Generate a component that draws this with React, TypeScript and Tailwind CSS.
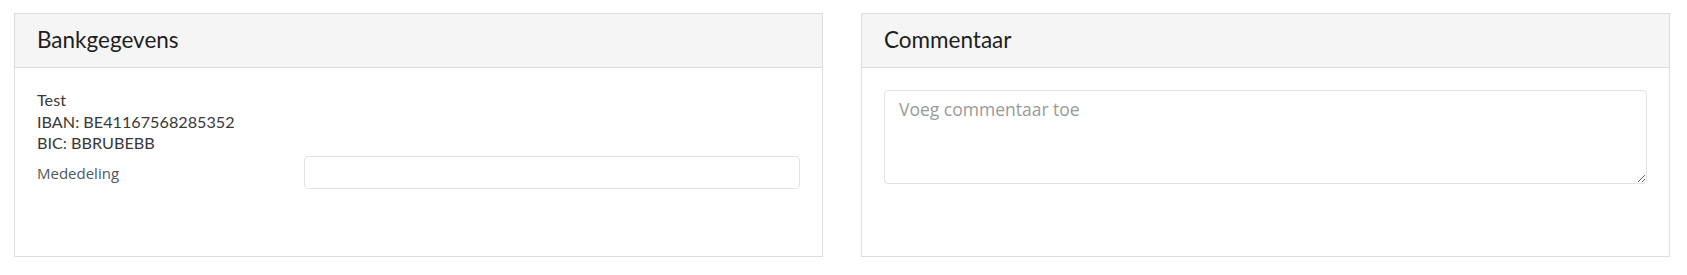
export default function App() {
  return (
    <div className="min-h-[275px] bg-white pl-[14px] pt-[13px]">
      <div className="flex gap-[38px]">
        <section className="flex h-[244px] w-[809px] flex-col border border-[#dddddd] bg-white">
          <header className="flex h-[54px] items-center border-b border-[#dddddd] bg-[#f5f5f5] px-[22px]">
            <h2 className="font-['Lato','Liberation_Sans',sans-serif] text-[22.5px] leading-none text-[#1e1e1e]">
              Bankgegevens
            </h2>
          </header>
          <div className="flex-1 px-[22px] pt-[21px]">
            <div className="font-['Lato','Liberation_Sans',sans-serif] text-[16.2px] leading-[21.5px] text-[#383838]">
              <div>Test</div>
              <div>IBAN: BE41167568285352</div>
              <div>BIC: BBRUBEBB</div>
            </div>
            <div className="mt-[2px] flex items-center">
              <label className="w-[267px] pt-[2px] font-['Open_Sans','Liberation_Sans',sans-serif] text-[15px] text-[#4f5963]">
                Mededeling
              </label>
              <input
                type="text"
                className="h-[33px] w-[496px] rounded-[4px] border border-[#e3e3e3] bg-white px-3 font-['Open_Sans','Liberation_Sans',sans-serif] text-[14px] outline-none"
              />
            </div>
          </div>
        </section>

        <section className="flex h-[244px] w-[809px] flex-col border border-[#dddddd] bg-white">
          <header className="flex h-[54px] items-center border-b border-[#dddddd] bg-[#f5f5f5] px-[22px]">
            <h2 className="font-['Lato','Liberation_Sans',sans-serif] text-[22.5px] leading-none text-[#1e1e1e]">
              Commentaar
            </h2>
          </header>
          <div className="flex-1 px-[22px] pt-[22px]">
            <textarea
              placeholder="Voeg commentaar toe"
              className="block h-[94px] w-full rounded-[4px] border border-[#e3e3e3] bg-white px-[14px] pt-[6px] font-['Open_Sans','Liberation_Sans',sans-serif] text-[17.5px] leading-[1.42857] text-[#333333] outline-none placeholder:text-[#9a9a9a]"
            />
          </div>
        </section>
      </div>
    </div>
  );
}
